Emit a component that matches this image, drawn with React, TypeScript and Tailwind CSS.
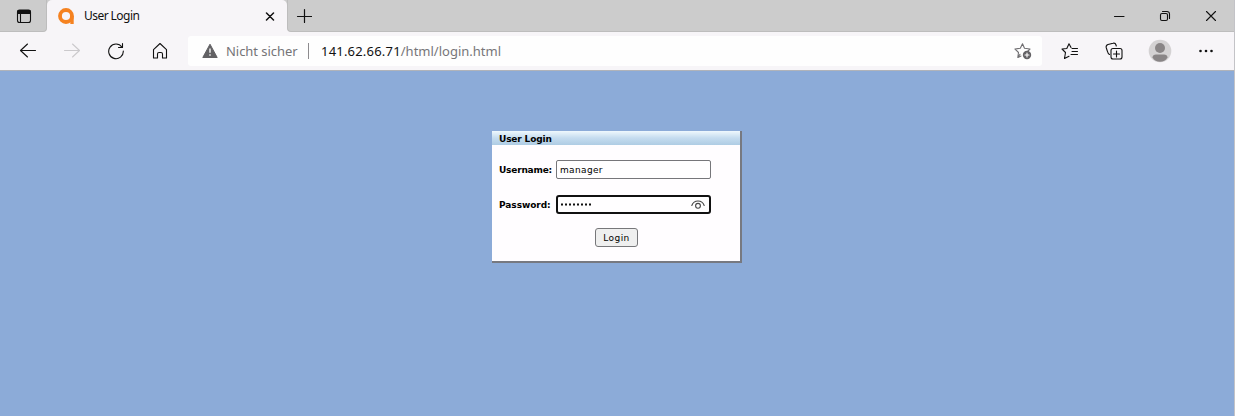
import type { ReactNode } from 'react';

function Icon({ className, size = 16, stroke = '#111111', width = 1.1, children }: { className?: string; size?: number; stroke?: string; width?: number; children: ReactNode }) {
  return (
    <svg className={`shrink-0 ${className ?? ''}`} width={size} height={size} viewBox={`0 0 ${size} ${size}`} fill="none" stroke={stroke} strokeWidth={width} strokeLinecap="round" strokeLinejoin="round">
      {children}
    </svg>
  );
}

function TabStrip() {
  return (
    <div className="flex h-8 bg-[#f7f5f8]">
      <div className="flex w-[47px] items-center rounded-br-[4px] border-r border-b border-[#bdbdbd] bg-[#cccccc] pl-4">
        <Icon>
          <rect x="1.5" y="2" width="13" height="12.5" rx="2" />
          <path d="M2 2.5h12v3H2z" fill="#111111" />
          <path d="M4.5 5v9" />
        </Icon>
      </div>
      <div className="w-[240px] bg-[#cccccc]">
        <div className="flex h-8 items-center rounded-tl-[5px] rounded-tr-[5px] bg-[#f7f5f8] pl-[11px]">
          <svg className="shrink-0" width="16" height="16" viewBox="0 0 16 16" fill="none" stroke="#f58220" strokeWidth="3.8">
            <circle cx="8" cy="8" r="6" />
            <path d="M14 8v8" strokeWidth="3.4" />
          </svg>
          <span className="ml-[10px] w-[175px] text-[12px] leading-4 tracking-[-0.55px] text-[#111]">User Login</span>
          <Icon className="ml-[6px]" size={10} width={1.5}><path d="M1.5 2l7 7M8.5 2l-7 7" /></Icon>
        </div>
      </div>
      <div className="flex flex-1 items-center rounded-bl-[4px] border-b border-l border-[#bdbdbd] bg-[#cccccc]">
        <Icon className="ml-[8px]" width={1.2}><path d="M8.5 1.5v13M1.500 8.500h14" /></Icon>
        <div className="ml-auto flex items-center">
          <Icon size={12} className="mr-[34px]"><path d="M1.500 6.500h9.500" /></Icon>
          <Icon size={12} className="mr-[34px]">
            <rect x="1.500" y="3.500" width="7" height="7" rx="1.500" />
            <path d="M3.500 1.500h4.500a2.500 2.500 0 0 1 2.500 2.500v4.500" />
          </Icon>
          <Icon size={12} className="mr-[17px]"><path d="M1.500 1.500l9 9M10.500 1.500l-9 9" /></Icon>
        </div>
      </div>
    </div>
  );
}

function Toolbar() {
  return (
    <div className="flex h-[39px] items-center border-b border-[#b0b3b9] bg-[#f7f5f8]">
      <Icon className="ml-[19px]" size={18}><path d="M16.500 8.500H1.500M8.500 2L1.500 8.500l7 6.500" /></Icon>
      <Icon className="ml-[26px]" size={18} stroke="#cbc9cc"><path d="M1.500 8.500h15M9.500 2l7 6.500-7 6.500" /></Icon>
      <Icon className="ml-[26px]" size={18}><path d="M15 5.200A7.300 7.300 0 1 0 16.300 9M15.500 1.500v4H11.500" /></Icon>
      <Icon className="ml-[26px]" size={18}><path d="M2.500 7.700L9 1.500l6.500 6.200V16h-4v-4a1.500 1.500 0 0 0-1.500-1.500H8A1.500 1.500 0 0 0 6.500 12v4h-4z" /></Icon>
      <div className="ml-[19px] flex h-[30px] w-[854px] items-center rounded-[3px] bg-[#fefefe] pl-[14px] text-[13px] leading-5">
        <svg className="shrink-0" width="16" height="16" viewBox="0 0 16 16">
          <path d="M8 1.200L15.200 14.500H.8z" fill="#626164" stroke="#626164" strokeLinejoin="round" />
          <path d="M8 5.500v4.300M8 11.300v1.400" stroke="#eeeeee" strokeWidth="1.500" />
        </svg>
        <span className="ml-2 w-[82px] whitespace-nowrap tracking-[-0.05px] text-[#757477]">Nicht sicher</span>
        <span className="h-4 w-px bg-[#8d8b8e]" />
        <span className="ml-3 whitespace-nowrap tracking-[0.2px] text-[#111]">141.62.66.71<span className="tracking-normal text-[#777679]">/html/login.html</span></span>
        <Icon className="mr-[10px] ml-auto" size={18} stroke="#706f72">
          <path d="M8.500 1.800l2 4.500 5.500.7-3 3M6 12.300l-2.200 3.200.7-5L1 7l5.300-.8 2.200-4.400M4 15.500l3-1.500" />
          <circle cx="13" cy="13" r="4.200" fill="#626164" stroke="none" />
          <path d="M13 11v4M11 13h4" stroke="#ffffff" />
        </Icon>
      </div>
      <Icon className="ml-[19px]" size={18}><path d="M10 5.500L8 1.800l-2.200 4.700L1 7l3.500 3.500-1 6 4.500-2.300M11 6.500h5.500M11 9.500h5.500M10 12.500h6.500" /></Icon>
      <Icon className="ml-[26px]" size={18}>
        <path d="M4.500 12.500C3 12 2.800 11 2.300 9L1.200 5.500C.8 3.800 1.500 3 3 2.500l5-1.200c1.500-.4 2.500 0 3 1.700l.3 1" />
        <rect x="6" y="6.500" width="11" height="10.500" rx="2" />
        <path d="M11.500 9v6M8.500 12h6" />
      </Icon>
      <svg className="ml-[25px] shrink-0" width="24" height="24" viewBox="0 0 24 24">
        <circle cx="12" cy="12" r="11.300" fill="#d4d2d3" />
        <circle cx="12" cy="9" r="5" fill="#898586" />
        <path d="M4.500 18.500c0-2 1.500-3 3.500-3h8c2 0 3.500 1 3.500 3-1.500 3-4.500 4.300-7.500 4.300s-6-1.300-7.500-4.300z" fill="#898586" />
      </svg>
      <svg className="ml-[26px] shrink-0" width="16" height="16" viewBox="0 0 16 16" fill="#111111">
        <circle cx="2.500" cy="8" r="1.300" /><circle cx="8" cy="8" r="1.300" /><circle cx="13.500" cy="8" r="1.300" />
      </svg>
    </div>
  );
}

function LoginPanel() {
  return (
    <form className="h-[132px] w-[250px] border-r-2 border-b-2 border-[#777980] bg-[#fffdff] font-['DejaVu_Sans',sans-serif] text-[9px] text-black">
      <h1 className="h-[14px] bg-linear-to-b from-[#eff8fd] via-[#c5dcef] to-[#aecce4] pl-[7px] text-[9px] leading-[17px] font-bold tracking-[-0.15px]">User Login</h1>
      <div className="mt-[15px] flex h-[19px] items-center">
        <label className="w-[64px] pt-[2px] pl-[7px] font-bold tracking-[-0.2px]">Username:</label>
        <div className="flex h-[19px] w-[155px] items-center rounded-[2px] border border-[#76767a] bg-[#fffeff] pt-[2px] pl-[3px] tracking-[0.35px]">manager</div>
      </div>
      <div className="mt-4 flex h-[19px] items-center">
        <label className="w-[64px] pt-[3px] pl-[7px] font-bold tracking-[-0.05px]">Password:</label>
        <div className="flex h-[19px] w-[155px] items-center justify-between rounded-[3px] border-2 border-[#111] bg-[#fffeff] pr-[4px] pl-[2px]">
          <svg width="34" height="3" viewBox="0 0 34 3" fill="#111111">
            {[0, 1, 2, 3, 4, 5, 6, 7].map((i) => <rect key={i} x={1 + i * 4} y="0.500" width="2" height="2" />)}
          </svg>
          <Icon size={14} stroke="#454545"><path d="M.8 7.500C3 1.500 11 1.500 13.200 7.500" /><circle cx="7" cy="7.800" r="2.400" /></Icon>
        </div>
      </div>
      <button type="button" className="mt-[14px] ml-[103px] flex h-[19px] w-[43px] items-center justify-center rounded-[3px] border border-[#77777a] bg-[#efefef] pt-[2px] tracking-[0.45px]">Login</button>
    </form>
  );
}

export default function App() {
  return (
    <div className="flex h-[416px] w-[1235px] overflow-hidden bg-[#8cabd8] font-['Noto_Sans',sans-serif]">
      <div className="min-w-0 flex-1">
        <TabStrip />
        <Toolbar />
        <main className="pt-[60px] pl-[492px]"><LoginPanel /></main>
      </div>
      <div className="w-px bg-[#c3c3c7]" />
    </div>
  );
}
